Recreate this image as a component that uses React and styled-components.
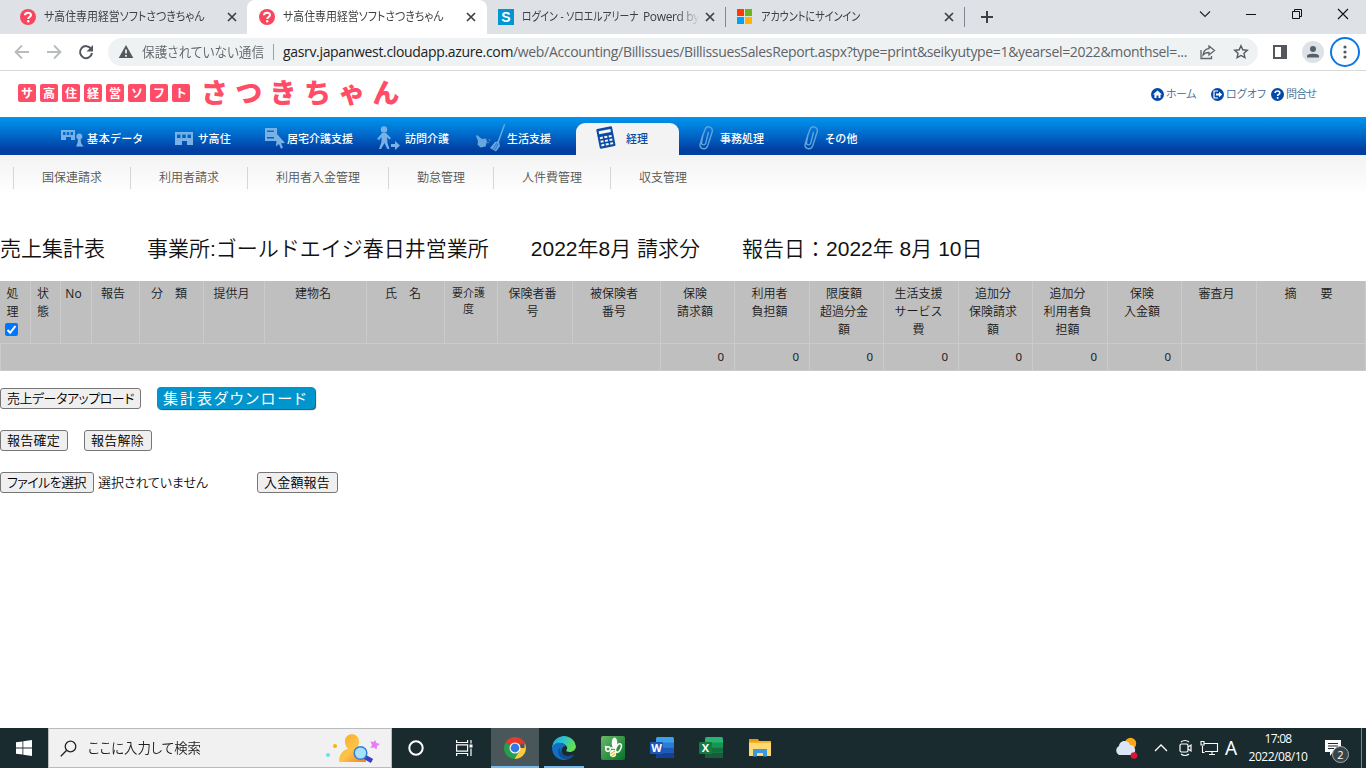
import React, { useLayoutEffect, useRef, useState } from 'react'
import styled, { createGlobalStyle } from 'styled-components'

const GlobalStyle = createGlobalStyle`
  * { box-sizing: border-box; }
  body {
    margin: 0;
    background: #fff;
    overflow: hidden;
    font-family: "Open Sans", "Noto Sans CJK JP", sans-serif;
  }
  svg { display: block; flex: none; }
`

const Label = styled.span`
  display: block;
  flex: none;
  width: ${(p) => p.$width}px;
  white-space: pre;
  font-feature-settings: "palt";
`
const Squeezed = styled.span`
  display: inline-block;
  transform-origin: 0 50%;
`

// spreads the letters so that a label fills its width
const FitText = ({ width, children }) => {
  const ref = useRef(null)
  const [spacing, setSpacing] = useState(0)
  useLayoutEffect(() => {
    const natural = ref.current.getBoundingClientRect().width
    setSpacing((width - natural) / ref.current.textContent.length)
  }, [width])
  return (
    <Label $width={width} style={{ letterSpacing: spacing }}>
      <span ref={ref}>{children}</span>
    </Label>
  )
}

// same, but narrows the glyphs themselves
const NarrowText = ({ width, children }) => {
  const ref = useRef(null)
  const [scale, setScale] = useState(1)
  useLayoutEffect(() => {
    setScale(width / ref.current.offsetWidth)
  }, [width])
  return (
    <Label $width={width}>
      <Squeezed ref={ref} style={{ transform: `scaleX(${scale})` }}>{children}</Squeezed>
    </Label>
  )
}

const Screen = styled.div`
  width: 1366px;
  height: 768px;
  display: flex;
  flex-direction: column;
  background: #fff;
`

/* ---------- browser ---------- */
const TabStrip = styled.div`
  height: 34px;
  display: flex;
  background: #dee1e6;
`
const Tab = styled.div`
  width: ${(p) => p.$width}px;
  height: 34px;
  display: flex;
  align-items: center;
  padding-left: ${(p) => p.$pad}px;
  background: ${(p) => (p.$active ? '#fff' : 'transparent')};
  border-radius: ${(p) => (p.$active ? '8px 8px 0 0' : '0')};
  color: #3c4043;
  font-size: 12px;
  line-height: 16px;
`
const Favicon = styled.div`
  width: 16px;
  height: 16px;
  margin-right: 8px;
`
const TabTitle = styled.div`
  display: flex;
  gap: 4px;
  width: 176px;
  margin-right: 7px;
  overflow: hidden;
  ${(p) => p.$fade && '-webkit-mask-image: linear-gradient(90deg, #000 155px, transparent 178px);'}
`
const TabLine = styled.div`
  width: 1px;
  height: 20px;
  margin-top: 7px;
  background: #80868b;
`
const WindowButtons = styled.div`
  display: flex;
  align-items: center;
  height: 28px;
  margin-left: 198px;
  gap: 30px;
`
const Toolbar = styled.div`
  height: 37px;
  display: flex;
  align-items: center;
  padding-left: 14px;
  border-bottom: 1px solid #d8dadc;
`
const NavIcons = styled.div`
  display: flex;
  gap: 16px;
  width: 94px;
`
const AddressBar = styled.div`
  width: 1150px;
  height: 28px;
  display: flex;
  align-items: center;
  padding-left: 10px;
  border-radius: 14px;
  background: #eff2f3;
  color: #5f6368;
  font-size: 14px;
  line-height: 20px;
  b { font-weight: 400; color: #202124; }
`
const Secure = styled.div`
  margin-left: 8px;
  font-weight: 350;
`
const Divider = styled.div`
  width: 1px;
  height: 16px;
  margin: 0 9px;
  background: #9aa0a6;
`
const ActionIcons = styled.div`
  display: flex;
  align-items: center;
  gap: 16px;
  margin-left: 12px;
`
const Avatar = styled.div`
  width: 22px;
  height: 22px;
  margin-left: 14px;
  border-radius: 50%;
  background: #dee1e6;
  display: flex;
  align-items: center;
  justify-content: center;
`
const MenuRing = styled.div`
  width: 30px;
  height: 30px;
  margin-left: 6px;
  border: 2px solid #0b78e6;
  border-radius: 50%;
  display: flex;
  align-items: center;
  justify-content: center;
`

/* ---------- site header ---------- */
const SiteHeader = styled.header`
  height: 46px;
  display: flex;
  padding-left: 18px;
`
const LogoTiles = styled.div`
  display: flex;
  gap: 4px;
  padding-top: 13px;
  width: 183px;
`
const LogoTile = styled.span`
  width: 18px;
  height: 18px;
  border-radius: 2px;
  background: #ff4d67;
  color: #fff;
  font: 700 12px/17px "Noto Sans CJK JP", sans-serif;
  text-align: center;
`
const LogoName = styled.div`
  display: flex;
  width: 950px;
  color: #ff4d67;
  font: 900 27px/41px "Noto Sans CJK JP", sans-serif;
  span { width: 34.3px; }
`
const HeaderLink = styled.div`
  display: flex;
  align-items: center;
  height: 46px;
  gap: 2px;
  margin-right: ${(p) => p.$gap}px;
  color: #3d6796;
  font-size: 11px;
  font-weight: 350;
  line-height: 16px;
`

/* ---------- navigation ---------- */
const MainNav = styled.nav`
  height: 38px;
  display: flex;
  align-items: flex-end;
  padding-left: 47px;
  background: linear-gradient(#0095ef 0%, #0083df 20%, #0060c2 55%, #0040a2 85%, #003f9f 100%);
`
const NavItem = styled.div`
  width: ${(p) => p.$width}px;
  height: 32px;
  display: flex;
  align-items: center;
  padding-left: ${(p) => p.$pad}px;
  border-radius: 9px 9px 0 0;
  background: ${(p) => (p.$active ? '#f3f3f3' : 'transparent')};
  color: ${(p) => (p.$active ? '#0a4aa5' : '#fff')};
  font-size: 11px;
  font-weight: 500;
  line-height: 16px;
`
const NavIcon = styled.div`
  width: ${(p) => p.$width}px;
  margin-top: -2px;
`
const SubNav = styled.nav`
  height: 40px;
  display: flex;
  padding: 12px 0 0 13px;
  background: linear-gradient(#f3f3f3, #fff);
`
const SubItem = styled.div`
  height: 22px;
  padding: 0 28px;
  border-left: 1px solid #d6d6d6;
  color: #555;
  font-size: 12px;
  font-weight: 350;
  line-height: 21px;
`

/* ---------- report ---------- */
const Title = styled.h1`
  height: 86px;
  margin: 0;
  padding-top: 38px;
  color: #111;
  font: 350 21px/32px "Liberation Sans", "Noto Sans CJK JP", sans-serif;
  white-space: pre;
`
const Table = styled.div`
  height: 90px;
  display: grid;
  grid-template-columns: 31px 30px 31px 48px 64px 61px 102px 78px 53px 75px 88px 74px 75px 74px 75px 74px 75px 74px 75px 109px;
  grid-template-rows: 63px 27px;
  background: #bfbfbf;
`
const Th = styled.div`
  padding: 4px 5px 0 0;
  border-right: 1px solid #cbcbcb;
  border-bottom: 1px solid #cbcbcb;
  color: #1a1a1a;
  font-size: ${(p) => (p.$small ? 11 : 12)}px;
  font-weight: ${(p) => (p.$latin ? 400 : 350)};
  line-height: ${(p) => (p.$small ? 16 : 18)}px;
  text-align: center;
  white-space: pre;
`
const Td = styled.div`
  grid-column: span ${(p) => p.$span || 1};
  padding-right: 10px;
  border-right: 1px solid #cbcbcb;
  border-bottom: 1px solid #cbcbcb;
  border-left: ${(p) => (p.$span ? '1px solid #cbcbcb' : 'none')};
  color: #222;
  font: 11.5px/26px "Noto Sans", sans-serif;
  text-align: right;
`
const CheckBox = styled.div`
  width: 13px;
  height: 13px;
  margin: 2px 0 0 5px;
  border-radius: 2px;
  background: #0075ff;
`
const Actions = styled.div`
  flex: 1;
  display: flex;
  flex-direction: column;
  gap: 20px;
  padding-top: 16px;
`
const ActionRow = styled.div`
  height: 22px;
  display: flex;
  align-items: center;
`
const Button = styled.button`
  width: ${(p) => p.$width}px;
  height: 21px;
  margin-left: ${(p) => p.$left || 0}px;
  padding: 0 0 0 6px;
  border: 1px solid #767676;
  border-radius: 3px;
  background: #efefef;
  color: #000;
  font: 350 13px/18px "Noto Sans CJK JP", sans-serif;
  text-align: left;
`
const DownloadButton = styled.button`
  width: 158px;
  height: 22px;
  margin-left: 16px;
  padding: 0 0 1px 6px;
  border: 0;
  border-radius: 4px;
  background: #0095cd;
  box-shadow: 1px 1px 1px #444;
  color: #fff;
  font: 15px/20px "Noto Sans CJK JP", sans-serif;
  text-align: left;
`
const FileState = styled.div`
  width: 160px;
  padding-left: 4px;
  color: #111;
  font: 350 13px/18px "Noto Sans CJK JP", sans-serif;
`

/* ---------- taskbar ---------- */
const TaskBar = styled.footer`
  height: 40px;
  display: flex;
  background: #1a2b30;
`
const TaskButton = styled.div`
  width: ${(p) => p.$width || 49}px;
  height: 40px;
  display: flex;
  align-items: center;
  justify-content: center;
  margin-right: ${(p) => p.$right || 0}px;
  background: ${(p) => (p.$active ? '#49575b' : 'transparent')};
  border-top: ${(p) => (p.$open ? '2px solid transparent' : '0')};
  border-bottom: ${(p) => (p.$open ? '2px solid #76b9ed' : '0')};
`
const SearchBox = styled.div`
  width: 344px;
  height: 40px;
  display: flex;
  align-items: center;
  padding-left: 11px;
  border: 1px solid #b9bbbc;
  background: #f1f1f1;
  color: #222;
  font-size: 14px;
  font-weight: 350;
  line-height: 20px;
`
const SearchLabel = styled.div`
  width: 249px;
  padding-left: 11px;
`
const Tray = styled.div`
  display: flex;
  align-items: center;
  margin-left: auto;
  width: 252px;
`
const InputMode = styled.span`
  width: 24px;
  padding-left: 6px;
  color: #fff;
  font: 19px/26px "Noto Sans", sans-serif;
`
const Clock = styled.div`
  width: 60px;
  margin-left: 5px;
  display: flex;
  flex-direction: column;
  align-items: center;
  color: #fff;
  font-size: 12px;
  line-height: 18px;
  padding-bottom: 1px;
`
const Notice = styled.div`
  position: relative;
  margin-left: 17px;
  width: 36px;
`
const Badge = styled.span`
  position: absolute;
  left: 7px;
  top: 6px;
  width: 17px;
  height: 17px;
  border: 1px solid #a5abad;
  border-radius: 50%;
  background: #37454a;
  color: #fff;
  font-size: 11px;
  line-height: 15px;
  text-align: center;
`
const DesktopEdge = styled.div`
  width: 1px;
  height: 40px;
  background: #7c868a;
`

const QuestionIcon = () => (
  <svg width="16" height="16" viewBox="0 0 16 16">
    <circle cx="8" cy="8" r="8" fill="#f9465f" />
    <path d="M5 6.200C5 2.800 11 2.900 11 6c0 2-2.800 2-2.800 4" fill="none" stroke="#fff" strokeWidth="2" />
    <circle cx="8.200" cy="12.300" r="1.200" fill="#fff" />
  </svg>
)
const CloseIcon = () => (
  <svg width="10" height="10" viewBox="0 0 10 10" stroke="#3c4043" strokeWidth="1.700">
    <path d="M1 1l8 8M9 1L1 9" />
  </svg>
)
const MicrosoftIcon = () => (
  <svg width="16" height="16" viewBox="0 0 16 16">
    <path d="M0 0h7v7H0z" fill="#ff3c00" />
    <path d="M8 0h7v7H8z" fill="#6bb71b" />
    <path d="M0 8h7v7H0z" fill="#00a3f4" />
    <path d="M8 8h7v7H8z" fill="#ffb400" />
  </svg>
)
const SIcon = styled.div`
  background: #0096d2;
  color: #fff;
  font: 700 14px/16px "Liberation Sans", sans-serif;
  text-align: center;
`

const Browser = () => (
  <>
    <TabStrip>
      <Tab $width={247} $pad={20}>
        <Favicon><QuestionIcon /></Favicon>
        <TabTitle><NarrowText width={160}>サ高住専用経営ソフトさつきちゃん</NarrowText></TabTitle>
        <CloseIcon />
      </Tab>
      <Tab $width={240} $pad={12} $active>
        <Favicon><QuestionIcon /></Favicon>
        <TabTitle><NarrowText width={160}>サ高住専用経営ソフトさつきちゃん</NarrowText></TabTitle>
        <CloseIcon />
      </Tab>
      <Tab $width={238} $pad={11}>
        <Favicon><SIcon>S</SIcon></Favicon>
        <TabTitle $fade>
          <NarrowText width={117}>ログイン - ソロエルアリーナ</NarrowText>
          <FitText width={56}>Powerd by</FitText>
        </TabTitle>
        <CloseIcon />
      </Tab>
      <TabLine />
      <Tab $width={238} $pad={11}>
        <Favicon><MicrosoftIcon /></Favicon>
        <TabTitle><NarrowText width={99}>アカウントにサインイン</NarrowText></TabTitle>
        <CloseIcon />
      </Tab>
      <TabLine />
      <Tab $width={34} $pad={16}>
        <svg width="12" height="12" viewBox="0 0 12 12" stroke="#3c4043" strokeWidth="2"><path d="M6 0v12M0 6h12" /></svg>
      </Tab>
      <WindowButtons>
        <svg width="16" height="16" viewBox="0 0 16 16" fill="none" stroke="#222" strokeWidth="1.100"><path d="M3 5.500l5 5 5-5" /></svg>
        <svg width="16" height="16" viewBox="0 0 16 16" stroke="#111"><path d="M3 8.500h10" /></svg>
        <svg width="16" height="16" viewBox="0 0 16 16" fill="none" stroke="#111"><path d="M3.500 5.500h7v7h-7zM5.500 5.500v-2h7v7h-2" /></svg>
        <svg width="16" height="16" viewBox="0 0 16 16" stroke="#111" strokeWidth="1.100"><path d="M3 3l10 10M13 3L3 13" /></svg>
      </WindowButtons>
    </TabStrip>
    <Toolbar>
      <NavIcons>
        <svg width="16" height="16" viewBox="0 0 16 16" fill="none" stroke="#b9bcbf" strokeWidth="1.800"><path d="M15 8H2M8 1.500L1.500 8 8 14.500" /></svg>
        <svg width="16" height="16" viewBox="0 0 16 16" fill="none" stroke="#b9bcbf" strokeWidth="1.800"><path d="M1 8h13M8 1.500L14.500 8 8 14.500" /></svg>
        <svg width="16" height="16" viewBox="0 0 16 16"><path d="M13.200 5A6 6 0 1 0 14 9" fill="none" stroke="#54585d" strokeWidth="2" /><path d="M15 1v6.500H8.500z" fill="#54585d" /></svg>
      </NavIcons>
      <AddressBar>
        <svg width="16" height="16" viewBox="0 0 16 16"><path d="M8 1l7.300 13H.7z" fill="#54585d" /><path d="M8 5.500v4M8 11v1.700" stroke="#fff" strokeWidth="1.600" /></svg>
        <Secure><NarrowText width={122}>保護されていない通信</NarrowText></Secure>
        <Divider />
        <FitText width={904}><b>gasrv.japanwest.cloudapp.azure.com</b>/web/Accounting/Billissues/BillissuesSalesReport.aspx?type=print&amp;seikyutype=1&amp;yearsel=2022&amp;monthsel=...</FitText>
        <ActionIcons>
          <svg width="18" height="16" viewBox="0 0 18 16" fill="none" stroke="#5f6368" strokeWidth="1.300"><path d="M2 6v8.500h10.500V12M10 2l5.500 4.500L10 11V8.500c-3 0-4.500.5-6 2.500.5-4 2.500-6 6-6.300z" /></svg>
          <svg width="16" height="16" viewBox="0 0 16 16" fill="none" stroke="#54585d" strokeWidth="1.400"><path d="M8 1.800l1.800 4 4.500.5-3.300 3 .9 4.400L8 11.500l-3.900 2.200.9-4.400-3.300-3 4.500-.5z" /></svg>
        </ActionIcons>
      </AddressBar>
      <ActionIcons>
        <svg width="18" height="14" viewBox="-3 0 18 14"><path d="M0 0h14v14H0zM2 2v10h6V2z" fill="#54585d" fillRule="evenodd" /></svg>
      </ActionIcons>
      <Avatar>
        <svg width="14" height="14" viewBox="0 0 14 14" fill="#53606e"><circle cx="7" cy="4" r="3" /><path d="M1 12.500V11c0-3 12-3 12 0v1.500z" /></svg>
      </Avatar>
      <MenuRing>
        <svg width="4" height="14" viewBox="0 0 4 14" fill="#54585d"><circle cx="2" cy="2" r="1.600" /><circle cx="2" cy="7" r="1.600" /><circle cx="2" cy="12" r="1.600" /></svg>
      </MenuRing>
    </Toolbar>
  </>
)

const Round = ({ children }) => (
  <svg width="13" height="13" viewBox="0 0 13 13">
    <circle cx="6.500" cy="6.500" r="6.500" fill="#0648a8" />
    {children}
  </svg>
)

const Header = () => (
  <SiteHeader>
    <LogoTiles>
      {[...'サ高住経営ソフト'].map((c) => <LogoTile key={c}>{c}</LogoTile>)}
    </LogoTiles>
    <LogoName>
      {[...'さつきちゃん'].map((c) => <span key={c}>{c}</span>)}
    </LogoName>
    <HeaderLink $gap={15}>
      <Round><path d="M6.500 2.500L2 6.500h1.500V10h2V7.500h2V10h2V6.500H11z" fill="#fff" /></Round>
      <FitText width={30}>ホーム</FitText>
    </HeaderLink>
    <HeaderLink $gap={5}>
      <Round><path d="M7 3H3v7h4" fill="none" stroke="#fff" strokeWidth="1.200" /><path d="M5 5.500h3V3.800l3.200 2.700L8 9.200V7.500H5z" fill="#fff" /></Round>
      <FitText width={40}>ログオフ</FitText>
    </HeaderLink>
    <HeaderLink $gap={0}>
      <Round><path d="M4.200 5c0-2.700 4.600-2.600 4.600-.1 0 1.600-2.200 1.500-2.200 3.200" fill="none" stroke="#fff" strokeWidth="1.600" /><circle cx="6.600" cy="10" r="1" fill="#fff" /></Round>
      <FitText width={30}>問合せ</FitText>
    </HeaderLink>
  </SiteHeader>
)

const clip = (
  <svg width="16" height="26" viewBox="0 0 16 26" fill="none" stroke="#5fa4e0" strokeWidth="1.400">
    <path d="M5 9.500L3.500 17.500c-.3 2.800 3.400 3.200 4.200.8L10.500 7M5 9.500L2.200 19c-1.200 5 5.700 6.800 7.500 1.800L14 7.500C15.700 2 9.200-.5 7 4.500L5 10" />
  </svg>
)

const menu = [
  { text: '基本データ', w: 118, pad: 14, iw: 26, tw: 56, icon: (
    <svg width="24" height="20" viewBox="0 0 24 20" fill="#78b1e5"><path d="M0 2h14v10h-4V9H5v3H0zM2 4v3h2.500V4zM5.800 4v3h2.500V4zM9.600 4v3H12V4z" fillRule="evenodd" /><circle cx="18.300" cy="8.500" r="3" /><path d="M17 11h2.600l.5 4 2.400 3.500h-7.500l1.500-3.500z" /></svg>) },
  { text: 'サ高住', w: 90, pad: 10, iw: 23, tw: 33, icon: (
    <svg width="18" height="13" viewBox="0 0 18 13" fill="#78b1e5"><path d="M0 0h18v13h-6V9H7v4H0zM2 2.500V6h3.500V2.500zM7.200 2.500V6h3.600V2.500zM12.500 2.500V6H16V2.500z" fillRule="evenodd" /></svg>) },
  { text: '居宅介護支援', w: 112, pad: 10, iw: 22, tw: 66, icon: (
    <svg width="21" height="22" viewBox="0 0 21 22" fill="#78b1e5"><path d="M0 1h12v13H0zM2 3.500V5h7V3.500zM2 10v1.500h7V10z" fillRule="evenodd" /><path d="M12 7l8 9-4 .2 2 4.500-2 1-2-4.700-3 2.500z" /></svg>) },
  { text: '訪問介護', w: 100, pad: 10, iw: 28, tw: 44, icon: (
    <svg width="24" height="24" viewBox="0 0 24 24" fill="#78b1e5"><circle cx="7" cy="3.500" r="3.200" /><path d="M5 7h4l5 5-1.500 1.500L10 11l.5 6 2 6h-2.200L7.500 17 4 23H2l2.500-7V11L2 14l-2-1zM14 18h4v-3l5 4.500-5 4.500v-3h-4z" /></svg>) },
  { text: '生活支援', w: 109, pad: 9, iw: 31, tw: 44, icon: (
    <svg width="30" height="28" viewBox="0 0 30 28" fill="#67a7df"><path d="M0 12l1-1 5 4 4-.5 1 3-1.500 5-5 1-3-3 .5-3.500z" /><circle cx="13.500" cy="16" r=".8" /><circle cx="12" cy="18.500" r=".7" /><path d="M28 0l1.300.6L23 18l1 4-4 5.500-6-3.500 5-6 2.500-.5z" /><path d="M17 25l4-6M19 26l3-6" stroke="#0052b3" strokeWidth=".6" /></svg>) },
  { text: '経理', w: 103, pad: 20, iw: 30, tw: 22, active: true, icon: (
    <svg width="21" height="24" viewBox="0 0 21 24"><g transform="rotate(-11 10 12)"><rect x="2" y="1.500" width="16" height="20" rx="1" fill="#0a4aa5" /><path d="M4 4h12v3H4z" fill="#f3f3f3" /><path d="M4 10h3v2H4zM8.500 10h3v2h-3zM13 10h3v2h-3zM4 13.700h3v2H4zM8.500 13.700h3v2h-3zM13 13.700h3v2h-3zM4 17.400h3v2H4zM8.500 17.400h3v2h-3zM13 17.400h3v2h-3z" fill="#f3f3f3" /></g></svg>) },
  { text: '事務処理', w: 105, pad: 19, iw: 22, tw: 44, icon: clip },
  { text: 'その他', w: 80, pad: 19, iw: 22, tw: 33, icon: clip },
]

const subMenu = [['国保連請求', 60], ['利用者請求', 60], ['利用者入金管理', 84], ['勤怠管理', 48], ['人件費管理', 60], ['収支管理', 48]]

const Navigation = () => (
  <>
    <MainNav>
      {menu.map((m) => (
        <NavItem key={m.text} $width={m.w} $pad={m.pad} $active={m.active}>
          <NavIcon $width={m.iw}>{m.icon}</NavIcon>
          <FitText width={m.tw}>{m.text}</FitText>
        </NavItem>
      ))}
    </MainNav>
    <SubNav>
      {subMenu.map(([text, width]) => (
        <SubItem key={text}><FitText width={width}>{text}</FitText></SubItem>
      ))}
    </SubNav>
  </>
)

const columns = [
  '状\n態', 'No', '報告', '分　類', '提供月', '建物名', '氏　名', '要介護\n度', '保険者番\n号', '被保険者\n番号',
  '保険\n請求額', '利用者\n負担額', '限度額\n超過分金\n額', '生活支援\nサービス\n費', '追加分\n保険請求\n額',
  '追加分\n利用者負\n担額', '保険\n入金額', '審査月', '摘　　要',
]

const Report = () => (
  <>
    <Title>売上集計表　　事業所:ゴールドエイジ春日井営業所　　2022年8月 請求分　　報告日：2022年 8月 10日</Title>
    <Table>
      <Th>
        {'処\n理'}
        <CheckBox>
          <svg width="13" height="13" viewBox="0 0 13 13" fill="none" stroke="#fff" strokeWidth="2"><path d="M2.500 7l2.700 2.700L10.500 3" /></svg>
        </CheckBox>
      </Th>
      {columns.map((c) => <Th key={c} $small={c.startsWith('要介護')} $latin={c === 'No'}>{c}</Th>)}
      <Td $span={11} />
      {[0, 0, 0, 0, 0, 0, 0, '', ''].map((v, i) => <Td key={i}>{v}</Td>)}
    </Table>
    <Actions>
      <ActionRow>
        <Button $width={141}><FitText width={127}>売上データアップロード</FitText></Button>
        <DownloadButton><FitText width={145}>集計表ダウンロード</FitText></DownloadButton>
      </ActionRow>
      <ActionRow>
        <Button $width={68}><FitText width={53}>報告確定</FitText></Button>
        <Button $width={68} $left={16}><FitText width={53}>報告解除</FitText></Button>
      </ActionRow>
      <ActionRow>
        <Button $width={94}><FitText width={79}>ファイルを選択</FitText></Button>
        <FileState><FitText width={110}>選択されていません</FitText></FileState>
        <Button $width={81} $left={3}><FitText width={66}>入金額報告</FitText></Button>
      </ActionRow>
    </Actions>
  </>
)

const OfficeIcon = ({ letter, colors }) => (
  <svg width="24" height="22" viewBox="0 0 24 22">
    <rect x="6" width="18" height="21" rx="1.500" fill={colors[0]} />
    <path d="M6 5.500h18v5H6z" fill={colors[1]} />
    <path d="M6 10.500h18v5H6z" fill={colors[2]} />
    <path d="M6 15.500h18v4a1.500 1.500 0 0 1-1.500 1.500h-15A1.500 1.500 0 0 1 6 19.500z" fill={colors[3]} />
    <rect y="5" width="13" height="12" rx="1" fill={colors[4]} />
    <text x="6.500" y="15" fill="#fff" fontSize="11" fontWeight="700" textAnchor="middle" fontFamily="Open Sans, sans-serif">{letter}</text>
  </svg>
)

const Windows = () => (
  <TaskBar>
    <TaskButton $width={48}>
      <svg width="16" height="16" viewBox="0 0 16 16" fill="#fff"><path d="M0 2.300l6.500-.9v6.200H0zM7.300 1.300L16 0v7.600H7.300zM0 8.400h6.500v6.200L0 13.700zM7.300 8.400H16V16l-8.700-1.300z" /></svg>
    </TaskButton>
    <SearchBox>
      <svg width="17" height="17" viewBox="0 0 17 17" fill="none" stroke="#222" strokeWidth="1.300"><circle cx="10.500" cy="6.500" r="5.300" /><path d="M6.700 10.300L.8 16.200" /></svg>
      <SearchLabel><NarrowText width={113}>ここに入力して検索</NarrowText></SearchLabel>
      <svg width="54" height="30" viewBox="0 0 54 30">
        <defs><linearGradient id="person" x1="0" x2="1" y2="1"><stop stopColor="#f5a81d" /><stop offset=".5" stopColor="#ffc34a" /><stop offset="1" stopColor="#ed8220" /></linearGradient></defs>
        <circle cx="9" cy="13" r="2" fill="#ffb400" /><circle cx="2" cy="22" r="2" fill="#6bdcf1" />
        <path d="M19 8c0-9 14-9 14 0 0 4-1 5-2 8 5 1 9 5 9 13H13c0-8 4-12 9-13-2-3-3-4-3-8z" fill="url(#person)" />
        <path d="M49 7l1.500 3 3.500 1-3 2-.5 3.500L48 14.500l-3.500.5 1.500-3-1.500-3.500 3.300.5z" fill="#e77cf5" />
        <path d="M39 24l7 4" stroke="#3b3ec9" strokeWidth="4.500" /><circle cx="34.500" cy="20" r="6.300" fill="#a8e0fb" stroke="#2f80d5" strokeWidth="1.500" />
      </svg>
    </SearchBox>
    <TaskButton $width={48}>
      <svg width="16" height="16" viewBox="0 0 16 16"><circle cx="8" cy="8" r="6.700" fill="none" stroke="#fff" strokeWidth="2" /></svg>
    </TaskButton>
    <TaskButton $width={48} $right={3}>
      <svg width="17" height="16" viewBox="0 0 17 16" fill="none" stroke="#fff" strokeWidth="1.200"><path d="M.6 0v2.500h11V0M.6 16v-2.500h11V16M.6 4.800h11v6.400H.6zM15 0v3.500M15 8.500V16" /><path d="M13.500 4.500h3v3h-3z" fill="#fff" stroke="none" /></svg>
    </TaskButton>
    <TaskButton $width={48} $right={5} $active $open>
      <svg width="22" height="22" viewBox="0 0 22 22">
        <path d="M11 11L1.500 5.500A11 11 0 0 1 20.500 5.500z" fill="#e33b2e" />
        <path d="M11 11h9.500V5.500A11 11 0 0 1 11 22z" fill="#fdca3c" />
        <path d="M11 11L1.500 5.500A11 11 0 0 0 10.500 22l5-8z" fill="#259f4b" />
        <path d="M11 5.500h9.500" stroke="#e33b2e" />
        <circle cx="11" cy="11" r="5.500" fill="#fff" /><circle cx="11" cy="11" r="4.400" fill="#3478e8" />
      </svg>
    </TaskButton>
    <TaskButton $width={40} $right={4} $open>
      <svg width="24" height="24" viewBox="0 0 24 24">
        <defs>
          <linearGradient id="wave" x2="1" y2=".4"><stop stopColor="#1ca6df" /><stop offset=".5" stopColor="#2bc3cf" /><stop offset="1" stopColor="#65df50" /></linearGradient>
          <clipPath id="disc"><circle cx="12" cy="12" r="12" /></clipPath>
        </defs>
        <g clipPath="url(#disc)">
          <path d="M0 12C0-4 24-4 24 10c0 5-5 7-9 5.500-2-.8 1-2 0-4.500C12 5 3 6 0 12z" fill="url(#wave)" />
          <path d="M0 12c2-6 10-7 14-2-5-1-7 9 1 11 3 .6 6-1.500 7-1.500C18 26-1 27 0 12z" fill="#126fc4" />
          <path d="M8.500 11c-2 8 6.500 11 13.500 7.500-3 6-10 6-14 2-3-3-2-7.500.5-9.500z" fill="#144f96" />
        </g>
      </svg>
    </TaskButton>
    <TaskButton>
      <svg width="24" height="24" viewBox="0 0 24 24">
        <defs><linearGradient id="leaf" x2="1" y2="1"><stop stopColor="#68b968" /><stop offset="1" stopColor="#067326" /></linearGradient></defs>
        <rect width="24" height="24" rx="2" fill="url(#leaf)" />
        <ellipse cx="13.500" cy="7" rx="2.800" ry="5.500" fill="#fff" /><ellipse cx="17.500" cy="12" rx="2.300" ry="4.500" transform="rotate(25 17.500 12)" fill="none" stroke="#fff" strokeWidth="1.500" />
        <circle cx="7" cy="13" r="2.300" fill="none" stroke="#fff" strokeWidth="1.500" /><path d="M4 10l2 2M10 12h4" stroke="#fff" strokeWidth="1.500" />
        <ellipse cx="12" cy="17.500" rx="3.200" ry="3.800" fill="#fff" /><path d="M9.500 18l4.500-3M10.500 20.500l4-3" stroke="#e6c52d" strokeWidth="1.400" />
      </svg>
    </TaskButton>
    <TaskButton>
      <OfficeIcon letter="W" colors={['#3da1ea', '#2c7cd6', '#195bbd', '#153f92', '#1b56b8']} />
    </TaskButton>
    <TaskButton>
      <OfficeIcon letter="X" colors={['#28b572', '#159653', '#12713f', '#185d38', '#117b42']} />
    </TaskButton>
    <TaskButton>
      <svg width="22" height="20" viewBox="0 0 22 20"><path d="M0 1h9l1 2h12v15H0z" fill="#f5b62c" /><path d="M0 5h22v13H0z" fill="#ffda72" /><path d="M0 1h9v2.500H0z" fill="#e69b0a" /><path d="M4 18.500V11h14v7.500h-4V15H8v3.500z" fill="#3b99df" /></svg>
    </TaskButton>
    <Tray>
      <svg width="24" height="22" viewBox="0 0 24 22"><circle cx="16.500" cy="6.500" r="5.700" fill="#faa61a" /><path d="M5 18a5 5 0 0 1 0-9c1-7 10-6 11-1 6 0 7 8 2 10z" fill="#dae6f6" /><circle cx="20" cy="18.500" r="3.300" fill="#db1538" /></svg>
      <svg width="41" height="18" viewBox="-16 0 41 18" fill="none" stroke="#fff" strokeWidth="1.300"><path d="M1 12l6-6 6 6" /></svg>
      <svg width="16" height="18" viewBox="0 0 16 18" fill="none" stroke="#fff" strokeWidth="1.200"><rect x="1" y="5" width="8" height="8" rx="1.500" /><path d="M9 8l3-2v6l-3-2M2 3q4-3 8 0M2 15q4 3 8 0" /></svg>
      <svg width="24" height="16" viewBox="-6 0 24 16" fill="none" stroke="#fff" strokeWidth="1.100"><path d="M3.500 3.500h13v8H4M8 14.500h6M11 11.500v3M1.500 6v6.500h2M0 1.500h3V5H0z" /></svg>
      <InputMode>A</InputMode>
      <Clock>
        <FitText width={27}>17:08</FitText>
        <FitText width={59}>2022/08/10</FitText>
      </Clock>
      <Notice>
        <svg width="16" height="16" viewBox="0 0 16 16"><path d="M0 0h16v12H8l-3 4v-4H0z" fill="#fff" /><path d="M3 3.500h10M3 6h10M3 8.500h6" stroke="#1a2b30" strokeWidth="1.100" /></svg>
        <Badge>2</Badge>
      </Notice>
      <DesktopEdge />
    </Tray>
  </TaskBar>
)

const App = () => (
  <Screen>
    <GlobalStyle />
    <Browser />
    <Header />
    <Navigation />
    <Report />
    <Windows />
  </Screen>
)

export default App
